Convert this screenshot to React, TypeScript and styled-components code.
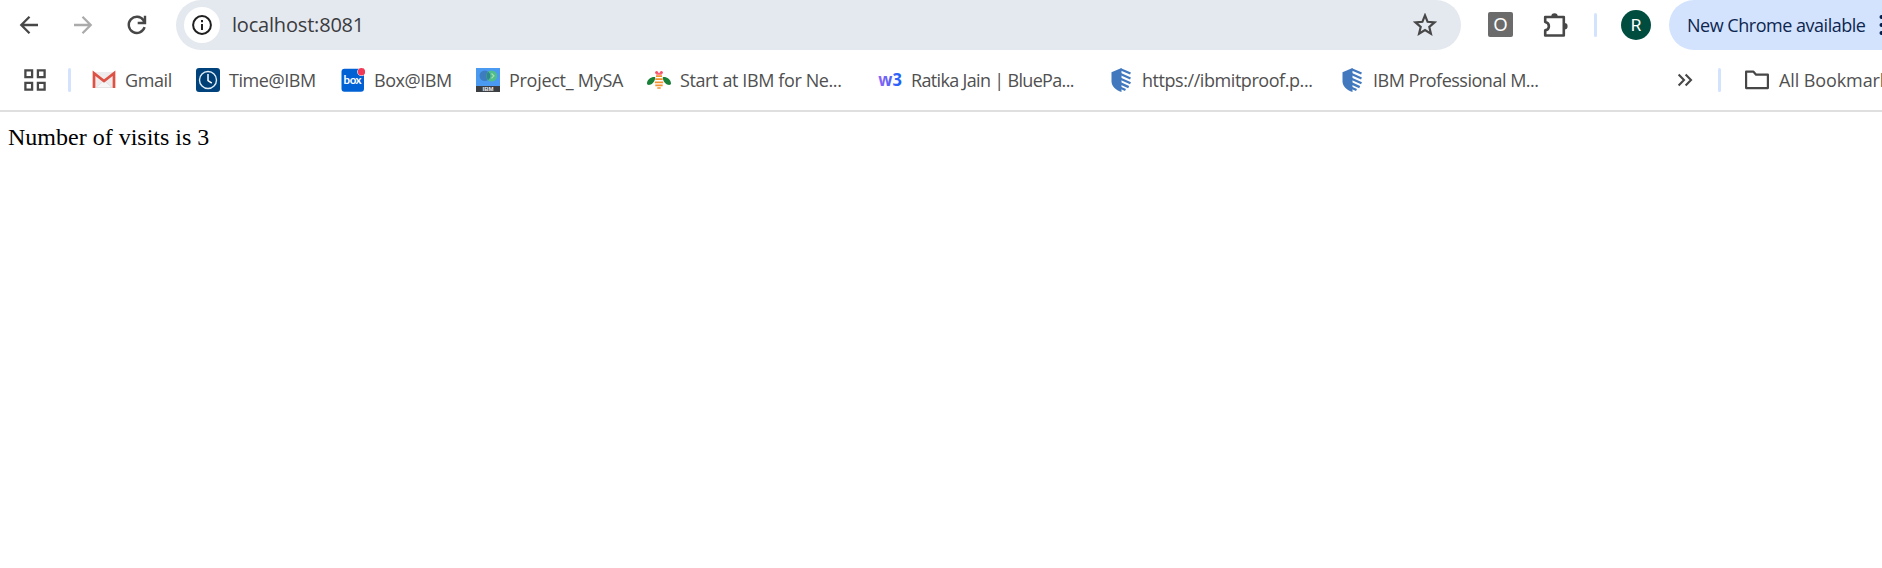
import React from 'react';
import styled, { createGlobalStyle } from 'styled-components';

const GlobalStyle = createGlobalStyle`
  body { margin: 0; background: #fff; overflow: hidden; }
  * { box-sizing: border-box; }
  svg { display: block; flex: none; }
`;

const Browser = styled.div`
  height: 568px;
  overflow: hidden;
  font-family: 'Open Sans', 'Noto Sans', sans-serif;
  font-weight: 400;
  color: #505050;
`;

const Toolbar = styled.header`
  display: flex;
  align-items: center;
  height: 50px;
`;

const NavButtons = styled.nav`
  display: flex;
  align-items: center;
  gap: 30px;
  width: 176px;
  padding: 0 0 1px 17px;
`;

const AddressBar = styled.div`
  display: flex;
  align-items: center;
  width: 1285px;
  height: 50px;
  padding: 0 24px 0 8px;
  border-radius: 25px;
  background: #e4e8ef;
`;

const SiteInfo = styled.div`
  display: grid;
  place-items: center;
  width: 36px;
  height: 36px;
  border-radius: 50%;
  background: #fff;
`;

const Address = styled.span`
  flex: 1;
  padding: 0 0 1px 12px;
  font-size: 20px;
  letter-spacing: -0.19px;
  color: #3a3b3e;
`;

const Actions = styled.div`
  display: flex;
  align-items: center;
  flex: 1;
  padding: 0 0 1px 27px;
`;

const ExtensionBadge = styled.span`
  display: grid;
  place-items: center;
  width: 25px;
  height: 25px;
  border-radius: 2px;
  background: #6b6b6b;
  color: #fff;
  font: 18px/26px 'Liberation Sans', sans-serif;
`;

const Divider = styled.span<{ $left: number; $right: number }>`
  flex: none;
  width: 3px;
  height: 24px;
  margin: 0 ${p => p.$right}px 0 ${p => p.$left}px;
  border-radius: 1.5px;
  background: #d3e3fd;
`;

const PuzzleSlot = styled.span`
  margin-left: 30px;
`;

const Avatar = styled.span`
  display: grid;
  place-items: center;
  flex: none;
  width: 30px;
  height: 30px;
  border-radius: 50%;
  background: #004d40;
  color: #fff;
  font: 400 17px/30px Roboto, sans-serif;
`;

const UpdatePill = styled.button`
  display: flex;
  flex: none;
  align-items: center;
  gap: 14px;
  width: 240px;
  height: 50px;
  padding: 0 0 0 18px;
  border: 0;
  border-radius: 25px;
  background: #d3e3fd;
  color: #0d2650;
  font: inherit;
  font-size: 18px;
  letter-spacing: -0.48px;
  white-space: nowrap;
`;

const PillSlot = styled.div`
  width: 213px;
  height: 50px;
  overflow: hidden;
`;

const BookmarksBar = styled.div`
  display: flex;
  align-items: center;
  height: 62px;
  padding-left: 23px;
  border-bottom: 2px solid #dfdfdf;
`;

const Bookmark = styled.a<{ $width: number }>`
  display: flex;
  flex: none;
  align-items: center;
  gap: 9px;
  width: ${p => p.$width}px;
`;

const Label = styled.span<{ $tracking?: number }>`
  padding-bottom: 1px;
  font-size: 18px;
  letter-spacing: ${p => p.$tracking ?? 0}px;
  white-space: nowrap;
`;

const Overflow = styled.span`
  margin-left: 121px;
`;

const Page = styled.main`
  padding: 12px 8px;
  color: #000;
  font: 24px 'Liberation Serif', serif;
`;

const BackIcon = () => (
  <svg width="24" height="24" viewBox="0 0 24 24" fill="none" stroke="#474747" strokeWidth="2.3">
    <path d="M21 12H4.5M12.5 3.8L4.3 12l8.2 8.2" />
  </svg>
);

const ForwardIcon = () => (
  <svg width="24" height="24" viewBox="0 0 24 24" fill="none" stroke="#ababab" strokeWidth="2.3">
    <path d="M3 12h16.5M11.5 3.8l8.2 8.2-8.2 8.2" />
  </svg>
);

const ReloadIcon = () => (
  <svg width="24" height="24" viewBox="0 0 24 24" fill="none" stroke="#474747" strokeWidth="2.4">
    <path d="M19.6 14.2A8.1 8.1 0 1 1 18.5 7.2L20 9" />
    <path d="M20 2.8V10h-7.3" />
    <path d="M20.5 5.5V10h-4.3z" fill="#474747" stroke="none" />
  </svg>
);

const InfoIcon = () => (
  <svg width="20" height="20" viewBox="0 0 20 20" fill="none" stroke="#1f1f1f" strokeWidth="2">
    <circle cx="10" cy="10" r="8.9" />
    <path d="M10 9v6M10 5v2.2" />
  </svg>
);

const StarIcon = () => (
  <svg width="24" height="24" viewBox="0 0 24 24" fill="none" stroke="#474747" strokeWidth="2.2">
    <path d="M12 2.400l2.600 6.400 6.900.6-5.200 4.500 1.600 6.700-5.900-3.600-5.900 3.600 1.600-6.700-5.200-4.500 6.900-.6z" />
  </svg>
);

const PuzzleIcon = () => (
  <svg width="25" height="26" viewBox="0 0 25 26">
    <path d="M2.2 5h18.600v18.500H2.200v-5.100c2.200-.4 3.700-2.100 3.700-4.200S4.400 10.400 2.200 10z" fill="none" stroke="#474747" strokeWidth="2.600" strokeLinejoin="round" />
    <path d="M8.300 4.500a3.200 3.200 0 0 1 6.400 0zM21.400 11a3.200 3.200 0 0 1 0 6.400z" fill="#474747" />
  </svg>
);

const DotsIcon = () => (
  <svg width="6" height="24" viewBox="0 0 6 24" fill="#041e49">
    <circle cx="2.500" cy="4" r="2" />
    <circle cx="2.500" cy="12" r="2" />
    <circle cx="2.500" cy="20" r="2" />
  </svg>
);

const AppsIcon = () => (
  <svg width="24" height="24" viewBox="0 0 24 24" fill="none" stroke="#474747" strokeWidth="2.300">
    <path d="M2.400 2.400h6.700v6.700H2.400zM14.900 2.400h6.700v6.700h-6.700zM2.400 14.900h6.700v6.700H2.400zM14.900 14.900h6.700v6.700h-6.700z" />
  </svg>
);

const GmailIcon = () => (
  <svg width="24" height="24" viewBox="0 0 24 24">
    <path d="M1.500 4h21v16h-21z" fill="#eeecec" />
    <path d="M4 19.500l8-7 8 7z" fill="#f7f7f7" stroke="#dedede" strokeWidth=".7" />
    <path d="M2 20V5.200L12 13 22 5.200V20" fill="none" stroke="#de5145" strokeWidth="2.700" />
  </svg>
);

const TimeIcon = () => (
  <svg width="24" height="24" viewBox="0 0 24 24">
    <rect width="24" height="24" rx="3" fill="#00437c" />
    <circle cx="12" cy="12" r="8.500" fill="#003f76" stroke="#e1edf7" strokeWidth="1.400" />
    <path d="M12 6v6.700l3.800 2.500" fill="none" stroke="#fff" strokeWidth="1.500" />
  </svg>
);

const BoxIcon = () => (
  <svg width="24" height="24" viewBox="0 0 24 24">
    <rect x=".5" y=".7" width="22.500" height="23" rx="3" fill="#0061d5" />
    <text x="11.600" y="15.600" textAnchor="middle" textLength="18" fontFamily="Lato, sans-serif" fontSize="11.500" fontWeight="700" fill="#fff">box</text>
    <circle cx="20.500" cy="3.700" r="4.300" fill="#fff" />
    <circle cx="20.500" cy="3.700" r="3.700" fill="#f03a57" />
  </svg>
);

const ProjectIcon = () => (
  <svg width="24" height="24" viewBox="0 0 24 24">
    <path d="M0 0h24v18H0z" fill="#4b9af2" />
    <path d="M0 18h24v6H0z" fill="#3b3f44" />
    <circle cx="8.800" cy="7.800" r="5.300" fill="#3d7cbe" />
    <circle cx="15.700" cy="8" r="5.500" fill="#4fbd8c" />
    <path d="M12.300 3.700a5.500 5.500 0 0 0 0 8.400 5.300 5.300 0 0 0 0-8.400z" fill="#2f8790" />
    <path d="M15.500 5.500l2.400 2.300-2.400 2.500" fill="none" stroke="#a8dfb0" strokeWidth="1.200" />
    <text x="12" y="23.300" textAnchor="middle" fontFamily="Liberation Sans, sans-serif" fontSize="6" fontWeight="700" fill="#eee">IBM</text>
  </svg>
);

const BeeIcon = () => (
  <svg width="24" height="24" viewBox="0 0 24 24">
    <path d="M8.200 9.200C5 8.500 0 11.200 0 15.500c0 2.200 3.800 1.700 5.600-.2C7.300 13.500 8.200 11.500 8.200 9.200zM15.800 9.200c3.200-.7 8.200 2 8.200 6.300 0 2.200-3.800 1.700-5.600-.2-1.700-1.800-2.600-3.800-2.600-6.100z" fill="#198038" />
    <path d="M9 8.100h6M8.300 11.200h7.400M7.800 14.300h8.400M8.300 17.300h7.400M10.300 20h3.400" stroke="#f2922f" strokeWidth="1.700" />
    <circle cx="9.600" cy="4.400" r="1.500" fill="#fa4d67" />
    <circle cx="14.400" cy="4.400" r="1.500" fill="#fa4d67" />
    <path d="M9.300 4.800h5.400v2H9.300z" fill="#fa6478" />
  </svg>
);

const W3Icon = () => (
  <svg width="24" height="24" viewBox="0 0 24 24">
    <defs>
      <linearGradient id="w3" x1="0" x2="1">
        <stop offset="0" stopColor="#9264f8" />
        <stop offset=".6" stopColor="#4c62f6" />
        <stop offset="1" stopColor="#1262fe" />
      </linearGradient>
    </defs>
    <text x=".3" y="18" textLength="23.500" lengthAdjust="spacingAndGlyphs" fontFamily="Open Sans, sans-serif" fontSize="17" fontWeight="700" fill="url(#w3)">w3</text>
  </svg>
);

const ShieldIcon = () => (
  <svg width="24" height="24" viewBox="0 0 24 24">
    <path d="M12.500 0v24C6.500 22 2.500 18.500 2.500 13V4.300z" fill="#4178be" />
    <path d="M11.500 1.200l10 4.300M11.500 6l10 4.500M11.500 10.800l10 4.500M11.500 15.400l8.200 3.700M11.500 19.700l5 2.300" stroke="#4178be" strokeWidth="2.300" />
  </svg>
);

const ChevronsIcon = () => (
  <svg width="16" height="16" viewBox="0 0 16 16" fill="none" stroke="#474747" strokeWidth="2.100">
    <path d="M1.600 2.500L7 8l-5.400 5.500M8.600 2.500L14 8l-5.400 5.500" />
  </svg>
);

const FolderIcon = () => (
  <svg width="26" height="22" viewBox="0 0 26 22" fill="none" stroke="#474747" strokeWidth="2.200" strokeLinejoin="round">
    <path d="M2.100 2.700h7.400l2.600 3h11.800v13.400H2.100z" />
  </svg>
);

const bookmarks = [
  { icon: <GmailIcon />, label: 'Gmail', width: 104, tracking: -0.4 },
  { icon: <TimeIcon />, label: 'Time@IBM', width: 145, tracking: -0.44 },
  { icon: <BoxIcon />, label: 'Box@IBM', width: 135, tracking: -0.44 },
  { icon: <ProjectIcon />, label: 'Project_ MySA', width: 171, tracking: -0.28 },
  { icon: <BeeIcon />, label: 'Start at IBM for Ne...', width: 231, tracking: -0.39 },
  { icon: <W3Icon />, label: 'Ratika Jain | BluePa...', width: 231, tracking: -0.67 },
  { icon: <ShieldIcon />, label: 'https://ibmitproof.p...', width: 231, tracking: -0.44 },
  { icon: <ShieldIcon />, label: 'IBM Professional M...', width: 216, tracking: -0.49 },
];

export default function App() {
  return (
    <Browser>
      <GlobalStyle />
      <Toolbar>
        <NavButtons>
          <BackIcon />
          <ForwardIcon />
          <ReloadIcon />
        </NavButtons>
        <AddressBar>
          <SiteInfo><InfoIcon /></SiteInfo>
          <Address>localhost:8081</Address>
          <StarIcon />
        </AddressBar>
        <Actions>
          <ExtensionBadge>O</ExtensionBadge>
          <PuzzleSlot><PuzzleIcon /></PuzzleSlot>
          <Divider $left={26} $right={24} />
          <Avatar>R</Avatar>
        </Actions>
        <PillSlot>
          <UpdatePill>New Chrome available<DotsIcon /></UpdatePill>
        </PillSlot>
      </Toolbar>
      <BookmarksBar>
        <AppsIcon />
        <Divider $left={21} $right={21} />
        {bookmarks.map(b => (
          <Bookmark key={b.label} $width={b.width}>
            {b.icon}
            <Label $tracking={b.tracking}>{b.label}</Label>
          </Bookmark>
        ))}
        <Overflow><ChevronsIcon /></Overflow>
        <Divider $left={25} $right={23} />
        <Bookmark $width={160}>
          <FolderIcon />
          <Label $tracking={-0.1}>All Bookmarks</Label>
        </Bookmark>
      </BookmarksBar>
      <Page>Number of visits is 3</Page>
    </Browser>
  );
}
